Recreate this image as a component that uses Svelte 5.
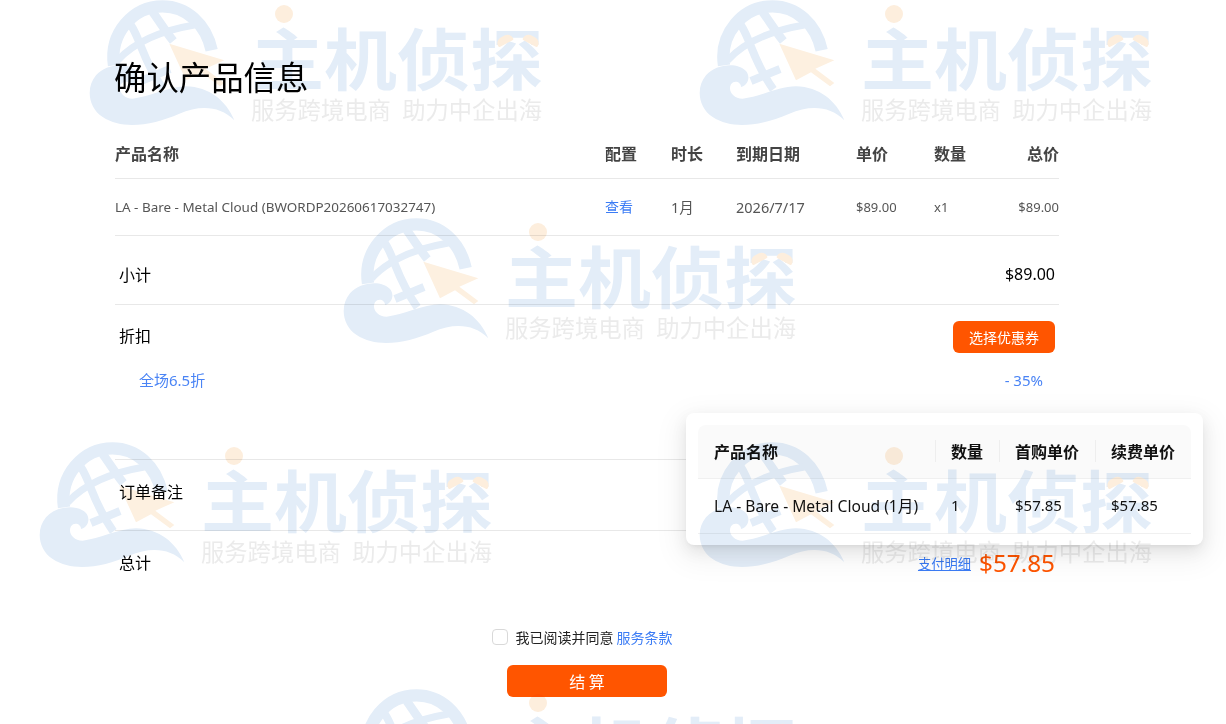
<script>
  const marks = [
    { x: 86, y: -3 },
    { x: 696, y: -3 },
    { x: 340, y: 215 },
    { x: 36, y: 439 },
    { x: 696, y: 439 },
    { x: 340, y: 686 }
  ];
</script>

<div class="page">
  <main class="content">
    <h1>确认产品信息</h1>

    <div class="grid head">
      <span>产品名称</span><span>配置</span><span>时长</span><span>到期日期</span><span>单价</span><span>数量</span><span class="end">总价</span>
    </div>
    <div class="grid item">
      <span class="name">LA - Bare - Metal Cloud (BWORDP20260617032747)</span>
      <a class="link" href="#view">查看</a>
      <span class="mid">1月</span>
      <span class="mid">2026/7/17</span>
      <span>$89.00</span>
      <span>x1</span>
      <span class="end">$89.00</span>
    </div>

    <section class="row subtotal">
      <span>小计</span><span class="amount">$89.00</span>
    </section>

    <section class="discount">
      <div class="row-plain">
        <span class="lift">折扣</span>
        <button class="coupon-btn">选择优惠券</button>
      </div>
      <div class="coupon-line"><span>全场6.5折</span><span>- 35%</span></div>
    </section>

    <section class="row note"><span>订单备注</span></section>

    <section class="total">
      <span class="lift">总计</span>
      <div class="total-right">
        <a class="detail" href="#detail">支付明细</a>
        <span class="price">$57.85</span>
      </div>
    </section>

    <label class="agree">
      <span class="box"></span>
      <span>我已阅读并同意 <a class="terms" href="#terms">服务条款</a></span>
    </label>
    <button class="pay">结 算</button>
  </main>

  <div class="popover">
    <div class="ptable phead">
      <span>产品名称</span><span>数量</span><span>首购单价</span><span>续费单价</span>
    </div>
    <div class="ptable pbody">
      <span class="pname">LA - Bare - Metal Cloud (1月)</span><span>1</span><span>$57.85</span><span>$57.85</span>
    </div>
  </div>

  {#each marks as m}
    <div class="mark" style="left:{m.x}px;top:{m.y}px">
      <svg class="logo" viewBox="0 0 600 405" width="200" height="135" aria-hidden="true">
        <g fill="none" stroke="#e3edf8" stroke-linecap="butt">
          <path d="M84 205 C70 110 140 28 230 28 C300 28 360 80 377 160" stroke-width="37" />
          <path d="M135 85 C165 130 170 190 232 277" stroke-width="24" />
          <path d="M200 45 C225 80 240 105 262 132" stroke-width="26" />
          <path d="M95 190 C150 130 230 100 325 84" stroke-width="21" />
          <path d="M165 252 L252 216" stroke-width="24" />
        </g>
        <path fill="#e3edf8" d="M445 370 C420 310 370 270 300 268 C250 268 190 300 140 305 C110 305 95 280 105 262 C115 248 135 255 135 270 C155 265 165 240 150 222 C125 195 60 200 30 235 C0 270 5 330 50 360 C110 400 200 385 280 350 C340 325 400 325 445 370 Z" />
        <path fill="#fdf0e0" d="M250 140 L415 190 L358 215 L415 258 L402 268 L345 226 L300 250 Z" />
      </svg>
      <span class="dot"></span>
      <span class="wm-title">主机侦探</span>
      <span class="dab left"></span>
      <span class="dab right"></span>
      <span class="wm-sub"><span>服务跨境电商</span><span>助力中企出海</span></span>
    </div>
  {/each}
</div>

<style>
  :global(body) {
    margin: 0;
    background: #fff;
  }
  .page {
    position: relative;
    height: 724px;
    overflow: hidden;
    font-family: "Noto Sans", "Noto Sans CJK SC", sans-serif;
    color: #000;
    font-size: 14px;
  }
  .content {
    width: 944px;
    margin-left: 115px;
    padding-top: 55px;
    display: flex;
    flex-direction: column;
  }
  h1 {
    margin: 0 0 0 -1px;
    height: 76px;
    font-size: 32.4px;
    line-height: 42px;
    font-weight: 400;
    color: #000;
    font-family: "Noto Sans CJK SC", sans-serif;
  }
  .grid {
    display: grid;
    grid-template-columns: 490px 66px 65px 120px 78px 60px 65px;
    align-items: center;
    border-bottom: 1px solid #e8e8e8;
  }
  .head {
    height: 47px;
    box-sizing: content-box;
    font-size: 16px;
    font-weight: 700;
    color: #444;
    font-family: "Noto Sans CJK SC", sans-serif;
  }
  .head span {
    margin-bottom: 4px;
  }
  .item {
    height: 56px;
    font-size: 13px;
    color: #555;
  }
  .item .name {
    font-size: 13.45px;
  }
  .item .mid {
    font-size: 14.5px;
    margin-top: -1px;
  }
  .end {
    text-align: right;
  }
  a {
    text-decoration: none;
  }
  .link {
    color: #3b7cf5;
    font-size: 14px;
    margin-top: -2px;
    font-family: "Noto Sans CJK SC", sans-serif;
  }
  .row {
    display: flex;
    align-items: center;
    justify-content: space-between;
    padding: 0 4px;
    border-bottom: 1px solid #e8e8e8;
    font-size: 16px;
  }
  .subtotal {
    height: 68px;
  }
  .subtotal span {
    margin-top: 8px;
  }
  .amount {
    font-size: 16px;
  }
  .discount {
    height: 155px;
    border-bottom: 1px solid #e8e8e8;
    box-sizing: border-box;
    padding: 16px 4px 0;
    font-size: 16px;
  }
  .row-plain {
    display: flex;
    justify-content: space-between;
    align-items: center;
    height: 32px;
  }
  .lift {
    margin-bottom: 4px;
  }
  .coupon-btn {
    width: 102px;
    height: 32px;
    border: 0;
    border-radius: 6px;
    background: #ff5500;
    color: #fff;
    font: 14px "Noto Sans CJK SC", sans-serif;
    padding: 0;
  }
  .coupon-line {
    display: flex;
    justify-content: space-between;
    padding: 18px 12px 0 20px;
    color: #4a84f5;
    font-size: 15px;
    line-height: 19px;
  }
  .note {
    height: 70px;
  }
  .note span {
    margin-bottom: 8px;
  }
  .total {
    display: flex;
    justify-content: space-between;
    align-items: center;
    height: 66px;
    padding: 0 4px;
    box-sizing: border-box;
    font-size: 16px;
  }
  .total .lift {
    margin-bottom: 5px;
  }
  .total-right {
    display: flex;
    align-items: center;
    gap: 8px;
    margin-bottom: 2px;
  }
  .detail {
    color: #3b7cf5;
    font-size: 13.25px;
    text-decoration: underline;
    font-family: "Noto Sans CJK SC", sans-serif;
  }
  .price {
    color: #ff5500;
    font-size: 24.3px;
    line-height: 32px;
  }
  .agree {
    display: flex;
    align-items: center;
    justify-content: center;
    gap: 7px;
    height: 20px;
    margin-top: 30px;
    padding-right: 9px;
    font-size: 14px;
    color: #222;
    font-family: "Noto Sans CJK SC", sans-serif;
  }
  .box {
    width: 14px;
    height: 14px;
    border: 1px solid #d9d9d9;
    border-radius: 4px;
    background: #fff;
  }
  .terms {
    color: #3b7cf5;
  }
  .pay {
    align-self: center;
    width: 160px;
    height: 32px;
    margin-top: 18px;
    border: 0;
    border-radius: 6px;
    background: #ff5500;
    color: #fff;
    font: 16px "Noto Sans CJK SC", sans-serif;
    padding: 0;
  }
  .popover {
    position: absolute;
    left: 686px;
    top: 413px;
    width: 493px;
    padding: 12px;
    height: 108px;
    background: #fff;
    border-radius: 8px;
    box-shadow: 0 6px 16px rgba(0, 0, 0, 0.08), 0 3px 6px -4px rgba(0, 0, 0, 0.12), 0 9px 28px 8px rgba(0, 0, 0, 0.05);
  }
  .ptable {
    display: grid;
    grid-template-columns: 237px 64px 96px 96px;
    align-items: center;
    border-bottom: 1px solid #f0f0f0;
  }
  .ptable span {
    padding-left: 16px;
    position: relative;
  }
  .phead {
    height: 53px;
    background: #fafafa;
    border-radius: 8px 8px 0 0;
    font-size: 16px;
    font-weight: 700;
    color: #111;
    font-family: "Noto Sans CJK SC", sans-serif;
    line-height: 20px;
  }
  .phead span {
    top: -1px;
  }
  .phead span + span::before {
    content: "";
    position: absolute;
    left: 0;
    top: 50%;
    height: 22px;
    margin-top: -11px;
    border-left: 1px solid #eee;
  }
  .pbody {
    height: 54px;
    font-size: 15px;
    color: #111;
  }
  .pbody span {
    top: -1px;
  }
  .pbody .pname {
    font-size: 15.6px;
  }
  .mark {
    position: absolute;
    width: 460px;
    height: 135px;
    pointer-events: none;
    mix-blend-mode: multiply;
  }
  .logo {
    position: absolute;
    left: 0;
    top: 0;
  }
  .dot {
    position: absolute;
    left: 189px;
    top: 8px;
    width: 18px;
    height: 18px;
    border-radius: 50%;
    background: #fdeedd;
  }
  .dab {
    position: absolute;
    top: 39px;
    width: 17px;
    height: 8px;
    background: #fdeedd;
    border-radius: 8px 8px 2px 2px;
  }
  .dab.left {
    left: 410px;
    transform: rotate(-28deg);
  }
  .dab.right {
    left: 437px;
    transform: rotate(28deg);
  }
  .wm-title {
    position: absolute;
    left: 165px;
    top: 17px;
    width: 292px;
    font-family: "Noto Sans CJK SC", sans-serif;
    font-size: 73px;
    line-height: 84px;
    font-weight: 700;
    color: #e3edf8;
    white-space: nowrap;
    transform: scaleY(0.92);
  }
  .wm-sub {
    position: absolute;
    left: 165px;
    top: 97px;
    width: 291px;
    display: flex;
    justify-content: space-between;
    font-family: "Noto Sans CJK SC", sans-serif;
    font-size: 23.3px;
    line-height: 30px;
    color: #ebebeb;
    white-space: nowrap;
  }
</style>
